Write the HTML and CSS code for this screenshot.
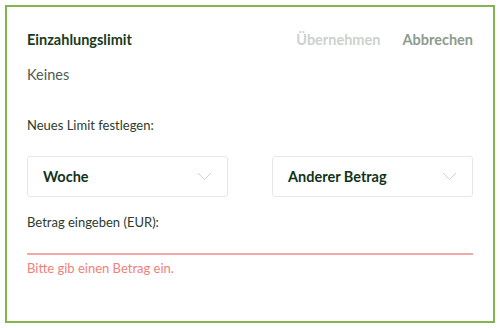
FILE: index.html
```html
<!DOCTYPE html>
<html lang="de">
<head>
  <meta charset="UTF-8">
  <title>Einzahlungslimit</title>
  <link rel="stylesheet" href="styles.css">
</head>
<body>
  <div class="panel">
    <div class="panel-head">
      <h1>Einzahlungslimit</h1>
      <div class="actions">
        <button class="btn btn-off">Übernehmen</button>
        <button class="btn btn-cancel">Abbrechen</button>
      </div>
    </div>
    <div class="current">Keines</div>
    <div class="label label-new">Neues Limit festlegen:</div>
    <div class="selects">
      <div class="select">
        <span>Woche</span>
        <svg width="15" height="9" viewBox="0 0 15 9"><path d="M1 1l6.5 6.5L14 1" fill="none" stroke="#cfd3cf" stroke-width="1"/></svg>
      </div>
      <div class="select">
        <span>Anderer Betrag</span>
        <svg width="15" height="9" viewBox="0 0 15 9"><path d="M1 1l6.5 6.5L14 1" fill="none" stroke="#cfd3cf" stroke-width="1"/></svg>
      </div>
    </div>
    <div class="label label-amount">Betrag eingeben (EUR):</div>
    <input class="amount" type="text">
    <div class="error">Bitte gib einen Betrag ein.</div>
  </div>
</body>
</html>
```

FILE: styles.css
```css
*,*::before,*::after{margin:0;padding:0;box-sizing:border-box}
html,body{background:#fff;font-family:Lato,"Open Sans",Arial,sans-serif}
body{padding:5px}

.panel{
  width:490px;height:318px;
  border:2px solid #84b54a;
  padding:22px 20px 0 20px;
}
.panel-head{
  display:flex;
  justify-content:space-between;
  align-items:center;
  height:20px;
}
.panel-head h1{
  font-size:14.5px;
  font-weight:700;
  color:#173a20;
}
.actions{display:flex;gap:22px}
.btn{
  background:none;border:none;
  font-family:inherit;
  font-size:14.5px;font-weight:700;
}
.btn-off{color:#cdd1cd}
.btn-cancel{color:#8d9c8e}

.current{
  margin-top:16px;
  line-height:20px;
  font-size:14.5px;
  color:#4e5d50;
}
.label{
  line-height:18px;
  font-size:13px;
  color:#2c3b2e;
}
.label-new{margin-top:31px}

.selects{
  margin-top:22px;
  display:flex;
  justify-content:space-between;
}
.select{
  width:201px;height:41px;
  border:1px solid #e6e8e6;
  border-radius:3px;
  display:flex;
  align-items:center;
  justify-content:space-between;
  padding:0 15px 0 15px;
  font-size:14.5px;font-weight:700;
  color:#11331a;
}

.label-amount{margin-top:16px}
.amount{
  display:block;
  width:100%;height:24px;
  border:none;
  border-bottom:2px solid #f5a9a7;
  outline:none;
  background:none;
}
.error{
  margin-top:4px;
  line-height:18px;
  font-size:13px;
  color:#f07f7c;
}
```
